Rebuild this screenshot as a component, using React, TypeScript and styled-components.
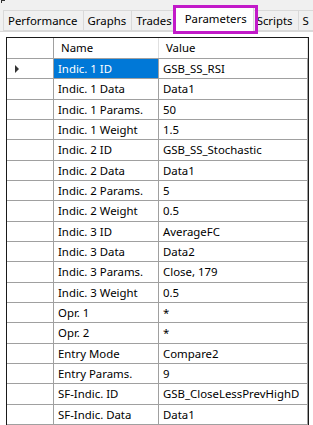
import React from 'react';
import styled, { createGlobalStyle } from 'styled-components';

const GlobalStyle = createGlobalStyle`
  html, body {
    margin: 0;
    padding: 0;
    background: #f0f0f0;
  }
  body {
    font-family: 'Noto Sans', 'Open Sans', sans-serif;
    font-size: 11.4px;
    color: #000;
  }
`;

const tabs = ['Performance', 'Graphs', 'Trades', 'Parameters', 'Scripts', 'S'];

const rows: [string, string][] = [
  ['Indic. 1 ID', 'GSB_SS_RSI'],
  ['Indic. 1 Data', 'Data1'],
  ['Indic. 1 Params.', '50'],
  ['Indic. 1 Weight', '1.5'],
  ['Indic. 2 ID', 'GSB_SS_Stochastic'],
  ['Indic. 2 Data', 'Data1'],
  ['Indic. 2 Params.', '5'],
  ['Indic. 2 Weight', '0.5'],
  ['Indic. 3 ID', 'AverageFC'],
  ['Indic. 3 Data', 'Data2'],
  ['Indic. 3 Params.', 'Close, 179'],
  ['Indic. 3 Weight', '0.5'],
  ['Opr. 1', '*'],
  ['Opr. 2', '*'],
  ['Entry Mode', 'Compare2'],
  ['Entry Params.', '9'],
  ['SF-Indic. ID', 'GSB_CloseLessPrevHighD'],
  ['SF-Indic. Data', 'Data1'],
];

export default function App() {
  return (
    <Page>
      <GlobalStyle />
      <TopStrip>
        <Corner />
      </TopStrip>
      <TabStrip>
        {tabs.map((t) => (
          <Tab key={t} $active={t === 'Parameters'}>
            {t}
          </Tab>
        ))}
      </TabStrip>
      <TabPage>
        <Grid>
          <HeaderRow>
            <RowHeadCell />
            <HeadCell>Name</HeadCell>
            <HeadCell>Value</HeadCell>
          </HeaderRow>
          {rows.map(([name, value], i) => (
            <Row key={name}>
              <RowHeadCell>{i === 0 && <Arrow />}</RowHeadCell>
              <Cell $selected={i === 0}>{name}</Cell>
              <Cell>{value}</Cell>
            </Row>
          ))}
        </Grid>
      </TabPage>
    </Page>
  );
}

const Page = styled.div`
  width: 313px;
  height: 425px;
  overflow: hidden;
  display: flex;
  flex-direction: column;
`;

const TopStrip = styled.div`
  height: 9px;
  flex: 0 0 auto;
`;

const Corner = styled.div`
  width: 3px;
  height: 2px;
  border-left: 1px solid #333;
  border-top: 1px solid #333;
  margin-left: 1px;
`;

const TabStrip = styled.div`
  display: flex;
  align-items: flex-end;
  height: 22px;
  padding-left: 3px;
  border-bottom: 1px solid #d9d9d9;
  position: relative;
  z-index: 1;
  white-space: nowrap;
`;

const Tab = styled.div<{ $active?: boolean }>`
  position: relative;
  flex: 0 0 auto;
  box-sizing: border-box;
  height: ${(p) => (p.$active ? '26px' : '21px')};
  margin: ${(p) => (p.$active ? '0 -2px -1px -3px' : '0')};
  padding: ${(p) => (p.$active ? '3px 6px 0 10px' : '1px 5px 0 4px')};
  background: ${(p) => (p.$active ? '#ffffff' : '#f0f0f0')};
  border: 1px solid #d9d9d9;
  border-bottom: ${(p) => (p.$active ? 'none' : '1px solid #d9d9d9')};
  border-right: ${(p) => (p.$active ? '1px solid #d9d9d9' : 'none')};
  line-height: 17px;
  z-index: ${(p) => (p.$active ? 2 : 0)};

  &::after {
    content: '';
    display: ${(p) => (p.$active ? 'block' : 'none')};
    position: absolute;
    left: -2px;
    right: -5px;
    top: -2px;
    bottom: -2px;
    border: 3px solid #c21ac9;
  }
`;

const TabPage = styled.div`
  flex: 1 1 auto;
  background: #ffffff;
  padding: 5px 3px 0 6px;
`;

const Grid = styled.div`
  border-left: 1px solid #1a1a1a;
  border-top: 1px solid #1a1a1a;
  border-right: 1px solid #1a1a1a;
  width: 303px;
  box-sizing: border-box;
  display: flex;
  flex-direction: column;
`;

const HeaderRow = styled.div`
  display: grid;
  grid-template-columns: 47px 105px 1fr;
  height: 21px;
  border-bottom: 1px solid #a0a0a0;
  box-sizing: border-box;
`;

const Row = styled.div`
  display: grid;
  grid-template-columns: 47px 105px 1fr;
  height: 20.33px;
  border-bottom: 1px solid #a0a0a0;
  box-sizing: border-box;
`;

const RowHeadCell = styled.div`
  border-right: 1px solid #a0a0a0;
  display: flex;
  align-items: center;
  padding-left: 8px;
`;

const HeadCell = styled.div`
  border-right: 1px solid #e0e0e0;
  padding-left: 7px;
  line-height: 20px;
  color: #000;
`;

const Cell = styled.div<{ $selected?: boolean }>`
  border-right: 1px solid #a0a0a0;
  padding-left: 4px;
  line-height: 19px;
  background: ${(p) => (p.$selected ? '#0078d7' : 'transparent')};
  color: ${(p) => (p.$selected ? '#ffffff' : '#000000')};
  white-space: nowrap;
  overflow: hidden;
`;

const Arrow = styled.div`
  width: 0;
  height: 0;
  border-top: 4px solid transparent;
  border-bottom: 4px solid transparent;
  border-left: 4px solid #333;
`;
